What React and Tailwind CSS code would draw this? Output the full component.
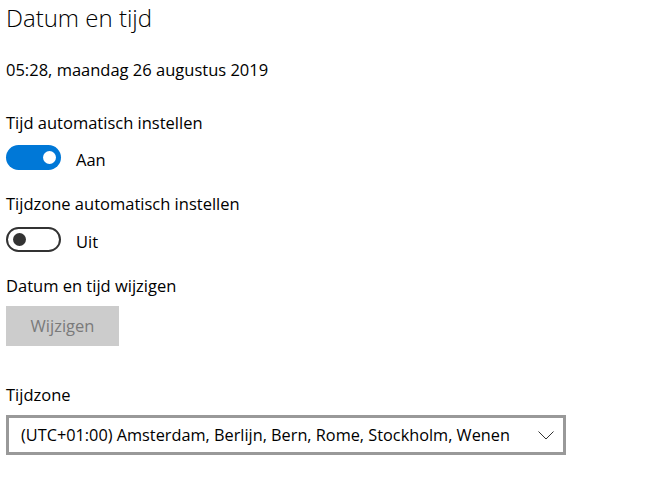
import React, { useState } from 'react';

function Toggle({ on }) {
  return (
    <div
      className={
        'w-[55px] h-[25px] rounded-full flex items-center px-[5px] ' +
        (on ? 'bg-[#0078d7] justify-end' : 'border-[2.5px] border-[#333] justify-start')
      }
    >
      <div className={'w-[13px] h-[13px] rounded-full ' + (on ? 'bg-white' : 'bg-[#333]')} />
    </div>
  );
}

export default function App() {
  const [auto] = useState(true);

  return (
    <div
      className="w-[665px] h-[490px] bg-white text-[#000] px-[6px] overflow-hidden"
      style={{ fontFamily: '"Open Sans", "Noto Sans", sans-serif' }}
    >
      <h1 className="text-[24px] font-light leading-[33px] pt-[1px]">Datum en tijd</h1>

      <p className="text-[16.5px] leading-[22px] mt-[25px]">05:28, maandag 26 augustus 2019</p>

      <p className="text-[16.5px] leading-[22px] mt-[31px]">Tijd automatisch instellen</p>
      <div className="flex items-center gap-[15px] mt-[11px] h-[25px]">
        <Toggle on={auto} />
        <span className="text-[16.5px] leading-[22px] translate-y-[2px]">Aan</span>
      </div>

      <p className="text-[16.5px] leading-[22px] mt-[23px]">Tijdzone automatisch instellen</p>
      <div className="flex items-center gap-[15px] mt-[12px] h-[25px]">
        <Toggle on={false} />
        <span className="text-[16.5px] leading-[22px] translate-y-[2px]">Uit</span>
      </div>

      <p className="text-[16.5px] leading-[22px] mt-[23px]">Datum en tijd wijzigen</p>
      <button
        disabled
        className="mt-[9px] w-[113px] h-[40px] bg-[#cccccc] text-[#7a7a7a] text-[16.5px] flex items-center justify-center"
      >
        Wijzigen
      </button>

      <p className="text-[16.5px] leading-[22px] mt-[38px]">Tijdzone</p>
      <div className="mt-[9px] w-[560px] h-[40px] border-[3px] border-[#999] flex items-center justify-between pl-[12px] pr-[9px]">
        <span className="text-[16.3px]">(UTC+01:00) Amsterdam, Berlijn, Bern, Rome, Stockholm, Wenen</span>
        <svg width="16" height="9" viewBox="0 0 16 9" fill="none" stroke="#333" strokeWidth="1">
          <path d="M0.5 0.5 L8 8 L15.5 0.5" />
        </svg>
      </div>
    </div>
  );
}
